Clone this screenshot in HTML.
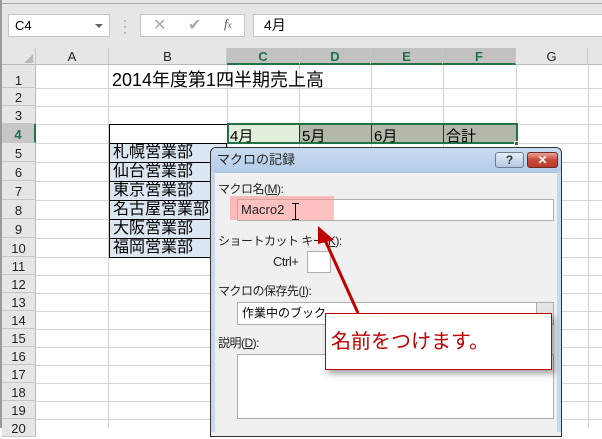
<!DOCTYPE html>
<html><head><meta charset="utf-8"><style>
*{margin:0;padding:0;box-sizing:border-box}
body{width:602px;height:428px;overflow:hidden;background:#fff;position:relative;font-family:"Liberation Sans","Noto Sans CJK JP",sans-serif}
.a{position:absolute}
.hl{position:absolute;background:#d4d4d4}
.vl{position:absolute;background:#d4d4d4}
.rh{position:absolute;left:2px;width:34px;text-align:center;font-size:13px;color:#222;background:#e6e6e6;border-bottom:1px solid #c6c6c6;border-right:1px solid #b8b8b8}
.ch{position:absolute;top:48px;height:17px;text-align:center;font-size:13px;color:#222;background:#e6e6e6;border-right:1px solid #c6c6c6;border-bottom:1px solid #b8b8b8;line-height:17px}
.bc{position:absolute;left:109px;width:118px;height:20px;background:#dce6f1;border:1px solid #000;font-size:16px;line-height:18px;padding-left:3px;color:#000}
.lbl{position:absolute;font-size:12px;color:#222;letter-spacing:-0.5px}
</style></head><body>
<div class="a" style="left:0;top:0;width:602px;height:48px;background:#e6e6e6"></div>
<div class="a" style="left:0;top:3px;width:602px;height:1px;background:#a8a8a8"></div>
<div class="a" style="left:0;top:0;width:2px;height:428px;background:#9a9a9a"></div>
<div class="a" style="left:8px;top:14px;width:102px;height:23px;background:#fff;border:1px solid #c6c6c6;font-size:13px;line-height:21px;padding-left:6px">C4</div>
<div class="a" style="left:95px;top:24px;border-left:4px solid transparent;border-right:4px solid transparent;border-top:4px solid #666"></div>
<div class="a" style="left:123px;top:17px;font-size:12px;color:#666;line-height:6px">·<br>·<br>·</div>
<div class="a" style="left:140px;top:14px;width:105px;height:23px;background:#fff;border:1px solid #c6c6c6"></div>
<div class="a" style="left:153px;top:15px;font-size:16px;color:#aaa">✕</div>
<div class="a" style="left:188px;top:15px;font-size:16px;color:#aaa">✔</div>
<div class="a" style="left:224px;top:16px;font-size:13px;color:#555;font-style:italic;font-family:'Liberation Serif',serif">f<span style="font-size:9px">x</span></div>
<div class="a" style="left:253px;top:14px;width:352px;height:23px;background:#fff;border:1px solid #c6c6c6;font-size:14px;line-height:21px;padding-left:10px">4月</div>
<div class="ch" style="left:2px;width:34px"></div>
<div class="a" style="left:24px;top:54px;border-left:9px solid transparent;border-bottom:9px solid #b8b8b8"></div>
<div class="ch" style="left:36px;width:73px">A</div>
<div class="ch" style="left:109px;width:118px">B</div>
<div class="ch" style="left:227px;width:73px;background:#c2c2c2;color:#217346;border-bottom:2px solid #217346;font-weight:bold">C</div>
<div class="ch" style="left:300px;width:71px;background:#c2c2c2;color:#217346;border-bottom:2px solid #217346;font-weight:bold">D</div>
<div class="ch" style="left:371px;width:72px;background:#c2c2c2;color:#217346;border-bottom:2px solid #217346;font-weight:bold">E</div>
<div class="ch" style="left:443px;width:73px;background:#c2c2c2;color:#217346;border-bottom:2px solid #217346;font-weight:bold">F</div>
<div class="ch" style="left:516px;width:72px">G</div>
<div class="ch" style="left:588px;width:20px"></div>
<div class="vl" style="left:108px;top:65px;width:1px;height:363px"></div>
<div class="vl" style="left:227px;top:65px;width:1px;height:363px"></div>
<div class="vl" style="left:299px;top:65px;width:1px;height:363px"></div>
<div class="vl" style="left:371px;top:65px;width:1px;height:363px"></div>
<div class="vl" style="left:443px;top:65px;width:1px;height:363px"></div>
<div class="vl" style="left:516px;top:65px;width:1px;height:363px"></div>
<div class="vl" style="left:588px;top:65px;width:1px;height:363px"></div>
<div class="hl" style="left:36px;top:88px;width:566px;height:1px"></div>
<div class="hl" style="left:36px;top:106px;width:566px;height:1px"></div>
<div class="hl" style="left:36px;top:124px;width:566px;height:1px"></div>
<div class="hl" style="left:36px;top:143px;width:566px;height:1px"></div>
<div class="hl" style="left:36px;top:162px;width:566px;height:1px"></div>
<div class="hl" style="left:36px;top:181px;width:566px;height:1px"></div>
<div class="hl" style="left:36px;top:200px;width:566px;height:1px"></div>
<div class="hl" style="left:36px;top:219px;width:566px;height:1px"></div>
<div class="hl" style="left:36px;top:238px;width:566px;height:1px"></div>
<div class="hl" style="left:36px;top:257px;width:566px;height:1px"></div>
<div class="hl" style="left:36px;top:275px;width:566px;height:1px"></div>
<div class="hl" style="left:36px;top:293px;width:566px;height:1px"></div>
<div class="hl" style="left:36px;top:311px;width:566px;height:1px"></div>
<div class="hl" style="left:36px;top:329px;width:566px;height:1px"></div>
<div class="hl" style="left:36px;top:347px;width:566px;height:1px"></div>
<div class="hl" style="left:36px;top:365px;width:566px;height:1px"></div>
<div class="hl" style="left:36px;top:383px;width:566px;height:1px"></div>
<div class="hl" style="left:36px;top:401px;width:566px;height:1px"></div>
<div class="hl" style="left:36px;top:419px;width:566px;height:1px"></div>
<div class="rh" style="top:65px;height:23px;line-height:32px">1</div>
<div class="rh" style="top:88px;height:18px;line-height:20px">2</div>
<div class="rh" style="top:106px;height:18px;line-height:20px">3</div>
<div class="rh" style="top:124px;height:19px;line-height:22px;background:#c6c6c6;color:#217346;font-weight:bold;border-right:2px solid #217346">4</div>
<div class="rh" style="top:143px;height:19px;line-height:22px">5</div>
<div class="rh" style="top:162px;height:19px;line-height:22px">6</div>
<div class="rh" style="top:181px;height:19px;line-height:22px">7</div>
<div class="rh" style="top:200px;height:19px;line-height:22px">8</div>
<div class="rh" style="top:219px;height:19px;line-height:22px">9</div>
<div class="rh" style="top:238px;height:19px;line-height:22px">10</div>
<div class="rh" style="top:257px;height:18px;line-height:20px">11</div>
<div class="rh" style="top:275px;height:18px;line-height:20px">12</div>
<div class="rh" style="top:293px;height:18px;line-height:20px">13</div>
<div class="rh" style="top:311px;height:18px;line-height:20px">14</div>
<div class="rh" style="top:329px;height:18px;line-height:20px">15</div>
<div class="rh" style="top:347px;height:18px;line-height:20px">16</div>
<div class="rh" style="top:365px;height:18px;line-height:20px">17</div>
<div class="rh" style="top:383px;height:18px;line-height:20px">18</div>
<div class="rh" style="top:401px;height:18px;line-height:20px">19</div>
<div class="rh" style="top:419px;height:18px;line-height:20px">20</div>
<div class="a" style="left:112px;top:66px;font-size:18px;color:#000">2014年度第1四半期売上高</div>
<div class="a" style="left:109px;top:124px;width:119px;height:20px;border:1px solid #000;background:#fff"></div>
<div class="a" style="left:228px;top:124px;width:72px;height:19px;background:#e2efda"></div>
<div class="a" style="left:300px;top:124px;width:216px;height:19px;background:#b2b9a8"></div>
<div class="a" style="left:299px;top:124px;width:1px;height:19px;background:#333"></div>
<div class="a" style="left:371px;top:124px;width:1px;height:19px;background:#333"></div>
<div class="a" style="left:443px;top:124px;width:1px;height:19px;background:#333"></div>
<div class="a" style="left:227px;top:123px;width:291px;height:21px;border:2px solid #217346"></div>
<div class="a" style="left:514px;top:141px;width:5px;height:5px;background:#217346;border:1px solid #fff"></div>
<div class="a" style="left:230px;top:125px;font-size:15px">4月</div>
<div class="a" style="left:302px;top:125px;font-size:15px">5月</div>
<div class="a" style="left:374px;top:125px;font-size:15px">6月</div>
<div class="a" style="left:446px;top:125px;font-size:15px">合計</div>
<div class="bc" style="top:143px">札幌営業部</div>
<div class="bc" style="top:162px">仙台営業部</div>
<div class="bc" style="top:181px">東京営業部</div>
<div class="bc" style="top:200px">名古屋営業部</div>
<div class="bc" style="top:219px">大阪営業部</div>
<div class="bc" style="top:238px">福岡営業部</div>
<div class="a" style="left:210px;top:147px;width:352px;height:290px;background:#f0f0f0;border:1px solid #333;border-radius:6px 6px 0 0;overflow:hidden">
 <div style="height:25px;background:linear-gradient(#c9dcf0,#b4cde8);border-bottom:1px solid #a9c1dd;font-size:13px;line-height:24px;padding-left:6px;color:#222">マクロの記録</div>
</div>
<div class="a" style="left:211px;top:172px;width:4px;height:260px;background:#c5d8ee"></div>
<div class="a" style="left:557px;top:172px;width:4px;height:260px;background:#c5d8ee"></div>
<div class="a" style="left:495px;top:152px;width:29px;height:16px;border:1px solid #6d7e93;border-radius:3px;background:linear-gradient(#e4edf7,#b6c9e0);font-size:12px;text-align:center;line-height:14px;color:#333;font-weight:bold">?</div>
<div class="a" style="left:527px;top:152px;width:31px;height:16px;border:1px solid #6b2a22;border-radius:3px;background:linear-gradient(#e9a596,#c74a3a 50%,#b83a2b);font-size:12px;text-align:center;line-height:14px;color:#fff;font-weight:bold">✕</div>
<div class="lbl" style="left:218px;top:180px">マクロ名(<u>M</u>):</div>
<div class="a" style="left:237px;top:199px;width:317px;height:22px;background:#fff;border:1px solid #adadad"></div>
<div class="a" style="left:230px;top:196px;width:104px;height:24px;background:rgba(255,150,150,0.6)"></div>
<div class="a" style="left:241px;top:202px;font-size:13px;color:#222">Macro2</div>
<div class="a" style="left:295px;top:203px;width:1px;height:16px;background:#000"></div>
<div class="a" style="left:292px;top:203px;width:7px;height:1px;background:#000"></div>
<div class="a" style="left:292px;top:219px;width:7px;height:1px;background:#000"></div>
<div class="lbl" style="left:218px;top:232px">ショートカット キー(<u>K</u>):</div>
<div class="lbl" style="left:273px;top:254px;font-size:13px">Ctrl+</div>
<div class="a" style="left:307px;top:251px;width:24px;height:22px;background:#fff;border:1px solid #adadad"></div>
<div class="lbl" style="left:218px;top:282px">マクロの保存先(<u>I</u>):</div>
<div class="a" style="left:237px;top:302px;width:317px;height:23px;background:#fff;border:1px solid #adadad;font-size:12px;line-height:21px;padding-left:4px">作業中のブック</div>
<div class="a" style="left:536px;top:302px;width:18px;height:23px;background:#e5e5e5;border:1px solid #adadad"></div>
<div class="lbl" style="left:218px;top:334px">説明(<u>D</u>):</div>
<div class="a" style="left:237px;top:354px;width:317px;height:65px;background:#fff;border:1px solid #adadad"></div>
<div class="a" style="left:325px;top:313px;width:227px;height:57px;background:#fff;border:1px solid #c00000;box-shadow:3px 4px 6px rgba(0,0,0,0.35);font-size:20px;color:#c00000;line-height:56px;padding-left:5px">名前をつけます。</div>
<svg class="a" style="left:0;top:0" width="602" height="428"><line x1="358" y1="313" x2="325" y2="240" stroke="#c00000" stroke-width="3"/><polygon points="318,226 334,240 318,244" fill="#c00000"/></svg>
</body></html>
